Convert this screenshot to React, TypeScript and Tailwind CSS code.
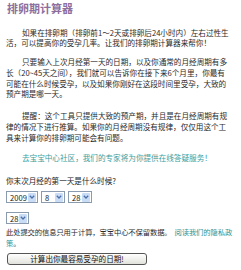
const cjk = "font-['Noto_Sans_CJK_SC','Noto_Sans_CJK_JP',sans-serif]";

function FakeSelect({ value, width }: { value: string; width: string }) {
  return (
    <div
      className={`flex h-[12px] items-center justify-between border border-[#8a9bb0] bg-white pl-[3px] pr-[1px] ${width}`}
    >
      <span className="text-[7.6px] leading-none text-[#222]">{value}</span>
      <span className="flex h-[9px] w-[8px] items-center justify-center rounded-[1px] bg-[#c9dcf6]">
        <svg width="6" height="4" viewBox="0 0 6 4">
          <path d="M0.8 0.8 L3 3 L5.2 0.8" fill="none" stroke="#4d6fa8" strokeWidth="1.3" />
        </svg>
      </span>
    </div>
  );
}

export default function App() {
  return (
    <div className={`h-[270px] w-[241px] overflow-hidden bg-white px-[6px] pt-[2px] text-[#2a2a2a] ${cjk}`}>
      <h1 className="pl-[1px] text-[11px] font-bold leading-[13px] text-[#8c6f9e]">排卵期计算器</h1>

      <div className="whitespace-nowrap text-[7.6px] leading-[10.6px]">
        <p className="mt-[12.5px]">
          <span className="pl-[16px]">如果在排卵期（排卵前1～2天或排卵后24小时内）左右过性生</span>
          <br />
          活，可以提高你的受孕几率。让我们的排卵期计算器来帮你！
        </p>

        <p className="mt-[8.7px]">
          <span className="pl-[16px]">只要输入上次月经第一天的日期，以及你通常的月经周期有多</span>
          <br />
          长（20~45天之间），我们就可以告诉你在接下来6个月里，你最有
          <br />
          可能在什么时候受孕，以及如果你刚好在这段时间里受孕，大致的
          <br />
          预产期是哪一天。
        </p>

        <p className="mt-[11.6px]">
          <span className="pl-[16px]">提醒：这个工具只提供大致的预产期，并且是在月经周期有规</span>
          <br />
          律的情况下进行推算。如果你的月经周期没有规律，仅仅用这个工
          <br />
          具来计算你的排卵期可能会有问题。
        </p>

        <p className="mt-[10px] pl-[16px] text-[#3a9e9e]">去宝宝中心社区，我们的专家将为你提供在线答疑服务！</p>

        <p className="mt-[12.5px] text-[#222]">你末次月经的第一天是什么时候?</p>
      </div>

      <div className="mt-[4.5px] flex gap-[3px]">
        <FakeSelect value="2009" width="w-[32px]" />
        <FakeSelect value="8" width="w-[24px]" />
        <FakeSelect value="28" width="w-[24px]" />
      </div>

      <div className="mt-[9px] flex">
        <FakeSelect value="28" width="w-[23px]" />
      </div>

      <p className="mt-[3px] whitespace-nowrap text-[7.3px] leading-[10.6px] tracking-[-0.1px]">
        此处提交的信息只用于计算，宝宝中心不保留数据。<span className="ml-[3px] text-[#2f9494]">阅读我们的隐私政</span>
        <br />
        <span className="text-[#2f9494]">策</span>。
      </p>

      <button className="mt-[4.5px] ml-[1px] flex h-[12px] w-[140px] items-center justify-center rounded-[3px] border border-[#555] bg-gradient-to-b from-white to-[#e2e2dc] text-[7.6px] leading-none text-[#111]">
        计算出你最容易受孕的日期!
      </button>
    </div>
  );
}
